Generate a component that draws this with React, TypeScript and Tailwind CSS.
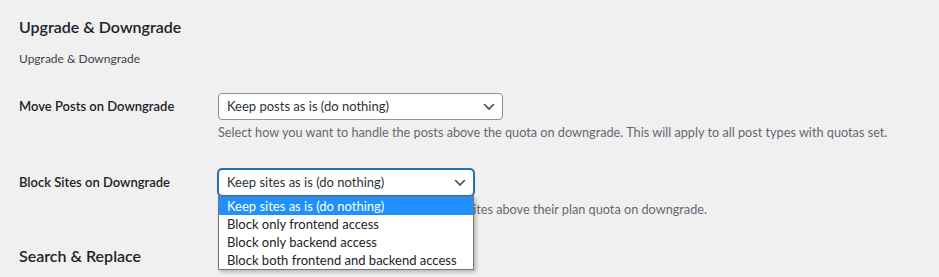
import React from "react";

const Chevron = () => (
  <svg width="16" height="16" viewBox="0 0 20 20" className="shrink-0">
    <path d="M5 6l5 5 5-5 2 1-7 7-7-7 2-1z" fill="#50575e" />
  </svg>
);

export default function App() {
  const font = { fontFamily: 'Lato, "Noto Sans", sans-serif' };
  return (
    <div
      className="w-[939px] h-[277px] overflow-hidden bg-[#f0f0f1] pl-[19px] pt-[16px] text-[#1d2327]"
      style={font}
    >
      <h2 className="text-[16px] leading-[22px] font-semibold">Upgrade &amp; Downgrade</h2>
      <p className="mt-[11px] text-[12px] leading-[20px] text-[#3c434a]">Upgrade &amp; Downgrade</p>

      <div className="mt-[24px] flex">
        <div className="w-[199px] shrink-0 h-[27px] flex items-center text-[13px] font-semibold whitespace-nowrap">
          Move Posts on Downgrade
        </div>
        <div>
          <div className="w-[285px] h-[27px] bg-white border border-[#8c8f94] rounded-[4px] flex items-center justify-between pl-[8px] pr-[5px] text-[13px] text-[#2c3338] whitespace-nowrap">
            <span>Keep posts as is (do nothing)</span>
            <Chevron />
          </div>
          <p className="mt-[2px] text-[12.7px] leading-[20px] text-[#646970] whitespace-nowrap">
            Select how you want to handle the posts above the quota on downgrade. This will apply to all post types with quotas set.
          </p>
        </div>
      </div>

      <div className="mt-[27px] flex">
        <div className="w-[199px] shrink-0 h-[27px] flex items-center text-[13px] font-semibold whitespace-nowrap">
          Block Sites on Downgrade
        </div>
        <div className="relative">
          <div className="w-[256px] h-[27px] bg-white border border-[#2271b1] shadow-[0_0_0_1px_#2271b1] rounded-[4px] flex items-center justify-between pl-[8px] pr-[5px] text-[13px] text-[#2c3338] whitespace-nowrap">
            <span>Keep sites as is (do nothing)</span>
            <Chevron />
          </div>
          <p className="mt-[3px] text-[12.7px] leading-[20px] text-[#646970] whitespace-nowrap">
            Select how you want to handle access to the sites above their plan quota on downgrade.
          </p>
          <div className="absolute left-0 top-[27px] w-[256px] bg-white border border-[#767676] shadow-[2px_2px_4px_rgba(0,0,0,0.25)] text-[13px] text-[#1d2327] whitespace-nowrap">
            <div className="h-[18px] leading-[18px] pl-[8px] bg-[#1e90ff] text-white">Keep sites as is (do nothing)</div>
            <div className="h-[18px] leading-[18px] pl-[8px]">Block only frontend access</div>
            <div className="h-[18px] leading-[18px] pl-[8px]">Block only backend access</div>
            <div className="h-[18px] leading-[18px] pl-[8px]">Block both frontend and backend access</div>
          </div>
        </div>
      </div>

      <h2 className="mt-[26px] text-[16px] leading-[22px] font-semibold">Search &amp; Replace</h2>
    </div>
  );
}
